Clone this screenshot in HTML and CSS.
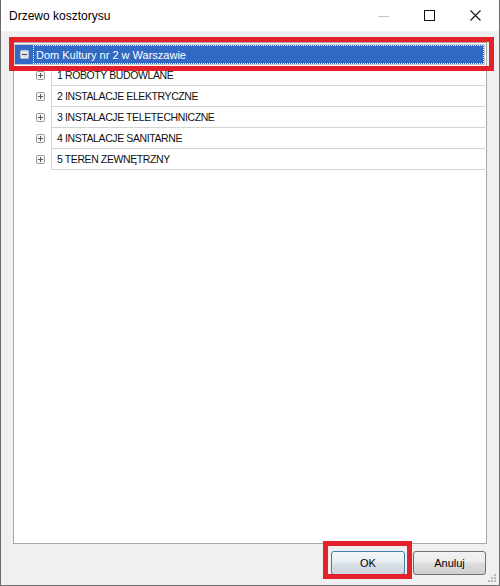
FILE: index.html
```html
<!DOCTYPE html>
<html>
<head>
<meta charset="utf-8">
<link rel="stylesheet" href="styles.css">
</head>
<body>
<div class="window">
  <div class="titlebar">
    <span class="title">Drzewo kosztorysu</span>
    <div class="controls">
      <span class="ctl"><svg width="12" height="12" viewBox="0 0 12 12"><line x1="0" y1="6.5" x2="11" y2="6.5" stroke="#c4c4c4" stroke-width="1"/></svg></span>
      <span class="ctl"><svg width="12" height="12" viewBox="0 0 12 12"><rect x="0.5" y="0.5" width="10" height="10" fill="none" stroke="#111" stroke-width="1"/></svg></span>
      <span class="ctl"><svg width="12" height="12" viewBox="0 0 12 12"><path d="M0.5 0.5 L10.5 10.5 M10.5 0.5 L0.5 10.5" stroke="#111" stroke-width="1.1"/></svg></span>
    </div>
  </div>
  <div class="content">
    <div class="tree">
      <div class="row root">
        <span class="toggle"><svg width="9" height="9" viewBox="0 0 9 9"><rect x="0.5" y="0.5" width="8" height="8" rx="1" fill="#dfe3ea" stroke="#b8bfcc"/><line x1="2" y1="4.5" x2="7" y2="4.5" stroke="#3a4a66"/></svg></span>
        <span class="cell focus">Dom Kultury nr 2 w Warszawie</span>
      </div>
      <div class="row child">
        <span class="toggle"><svg width="9" height="9" viewBox="0 0 9 9"><rect x="0.5" y="0.5" width="8" height="8" rx="1" fill="#f4f4f4" stroke="#9a9a9a"/><path d="M2 4.5 H7 M4.5 2 V7" stroke="#555"/></svg></span>
        <span class="cell">1 ROBOTY BUDOWLANE</span>
      </div>
      <div class="row child">
        <span class="toggle"><svg width="9" height="9" viewBox="0 0 9 9"><rect x="0.5" y="0.5" width="8" height="8" rx="1" fill="#f4f4f4" stroke="#9a9a9a"/><path d="M2 4.5 H7 M4.5 2 V7" stroke="#555"/></svg></span>
        <span class="cell">2 INSTALACJE ELEKTRYCZNE</span>
      </div>
      <div class="row child">
        <span class="toggle"><svg width="9" height="9" viewBox="0 0 9 9"><rect x="0.5" y="0.5" width="8" height="8" rx="1" fill="#f4f4f4" stroke="#9a9a9a"/><path d="M2 4.5 H7 M4.5 2 V7" stroke="#555"/></svg></span>
        <span class="cell">3 INSTALACJE TELETECHNICZNE</span>
      </div>
      <div class="row child">
        <span class="toggle"><svg width="9" height="9" viewBox="0 0 9 9"><rect x="0.5" y="0.5" width="8" height="8" rx="1" fill="#f4f4f4" stroke="#9a9a9a"/><path d="M2 4.5 H7 M4.5 2 V7" stroke="#555"/></svg></span>
        <span class="cell">4 INSTALACJE SANITARNE</span>
      </div>
      <div class="row child">
        <span class="toggle"><svg width="9" height="9" viewBox="0 0 9 9"><rect x="0.5" y="0.5" width="8" height="8" rx="1" fill="#f4f4f4" stroke="#9a9a9a"/><path d="M2 4.5 H7 M4.5 2 V7" stroke="#555"/></svg></span>
        <span class="cell">5 TEREN ZEWNĘTRZNY</span>
      </div>
    </div>
    <div class="footer">
      <button class="btn default">OK</button>
      <button class="btn">Anuluj</button>
    </div>
  </div>
  <div class="mark mark-tree"></div>
  <div class="mark mark-ok"></div>
  <svg class="grip" width="8" height="8" viewBox="0 0 8 8">
    <g fill="#b8b8b8">
      <rect x="6" y="0" width="2" height="2"/>
      <rect x="3" y="3" width="2" height="2"/><rect x="6" y="3" width="2" height="2"/>
      <rect x="0" y="6" width="2" height="2"/><rect x="3" y="6" width="2" height="2"/><rect x="6" y="6" width="2" height="2"/>
    </g>
  </svg>
</div>
</body>
</html>
```
FILE: styles.css
```css
* { box-sizing: border-box; }
html, body { margin: 0; padding: 0; }
body { width: 500px; height: 586px; overflow: hidden; background: #f0f0f0; }

.window {
  position: relative;
  width: 500px;
  height: 586px;
  display: flex;
  flex-direction: column;
  border-left: 1px solid #6a6a6a;
  border-right: 1px solid #6a6a6a;
  border-bottom: 1px solid #6a6a6a;
  background: #f0f0f0;
}

.titlebar {
  height: 31px;
  flex: none;
  background: #ffffff;
  display: flex;
  align-items: center;
  justify-content: space-between;
}
.title {
  padding-left: 8px;
  font-family: "Liberation Sans", Arial, sans-serif;
  font-size: 12px;
  color: #000;
}
.controls { display: flex; height: 100%; }
.ctl {
  width: 46px;
  height: 100%;
  display: flex;
  align-items: center;
  justify-content: center;
}

.content {
  flex: 1;
  display: flex;
  flex-direction: column;
  padding: 11px 12px 10px 12px;
  min-height: 0;
}

.tree {
  flex: 1;
  background: #fff;
  border: 1px solid #a8a8a8;
  padding: 1px 1px 0 0;
  font-family: "Liberation Sans", Arial, sans-serif;
  font-size: 11px;
  color: #000;
}

.row {
  display: flex;
  height: 21px;
}
.toggle {
  flex: none;
  display: flex;
  align-items: center;
  justify-content: flex-end;
}
.cell {
  flex: 1;
  display: flex;
  align-items: center;
}

.root {
  background: #316ac5;
  border: 1px solid #c8c8c8;
}
.root .toggle { width: 18px; padding-right: 4px; }
.root .cell {
  color: #fff;
  padding-left: 3px;
  outline: 1px dotted #ffffff;
  outline-offset: -1px;
}

.child .toggle { width: 37px; padding-right: 6px; }
.child .cell {
  border-left: 1px solid #d4d4d4;
  border-bottom: 1px solid #d4d4d4;
  padding-left: 5px;
  font-size: 10.5px;
  letter-spacing: -0.4px;
  color: #111;
}

.footer {
  flex: none;
  display: flex;
  justify-content: flex-end;
  gap: 8px;
  padding-top: 7px;
  padding-right: 1px;
}
.btn {
  width: 73px;
  height: 24px;
  font-family: "Liberation Sans", Arial, sans-serif;
  font-size: 11px;
  color: #000;
  border: 1px solid #707070;
  border-radius: 3px;
  background: linear-gradient(#f2f2f2 0%, #ebebeb 45%, #dddddd 50%, #cfcfcf 100%);
  padding: 0;
}
.btn.default {
  width: 74px;
  border-color: #3c7fb1;
  background: linear-gradient(#f4f6f8 0%, #e9eef2 45%, #dbe2e8 50%, #cdd6de 100%);
}

.mark {
  position: absolute;
  border: 5px solid #e4202a;
  pointer-events: none;
}
.mark-tree { left: 8px; top: 37px; width: 485px; height: 34px; }
.mark-ok { left: 322px; top: 541px; width: 89px; height: 38px; }

.grip { position: absolute; right: 3px; bottom: 3px; }
```
